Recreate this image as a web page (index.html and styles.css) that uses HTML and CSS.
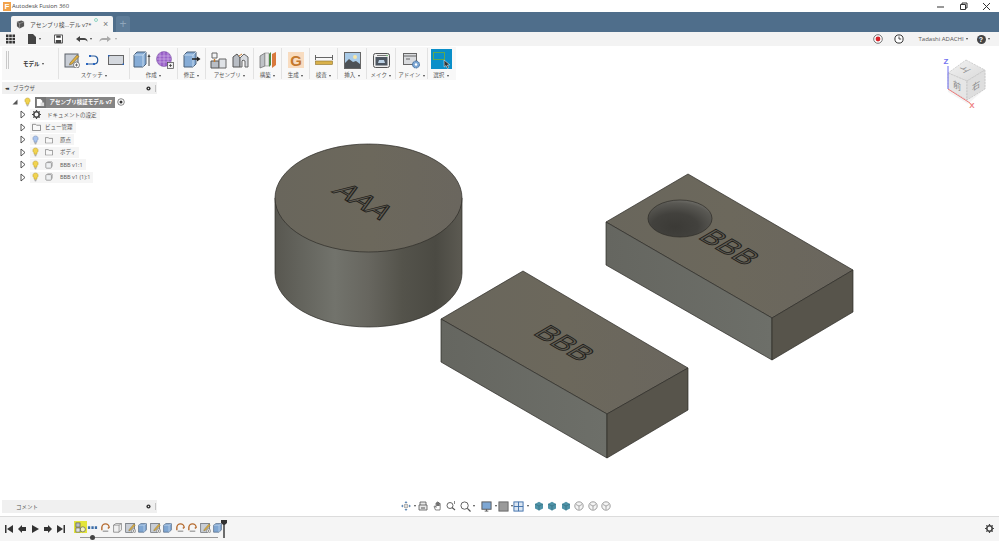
FILE: index.html
```html
<!DOCTYPE html>
<html lang="ja">
<head>
<meta charset="utf-8">
<title>Autodesk Fusion 360</title>
<link rel="stylesheet" href="styles.css">
</head>
<body>
<svg class="defs" width="0" height="0">
  <defs>
    <symbol id="i-sketch" viewBox="0 0 16 16"><rect x="1" y="2" width="13" height="13" fill="#c9ced6" stroke="#5b6068"/><path d="M6 11 13 3l2 1.500L8 12l-2.500 1z" fill="#e0b040" stroke="#77663a" stroke-width=".6"/><circle cx="12.500" cy="13" r="3" fill="#fff" stroke="#555" stroke-width=".7"/><path d="M11 13h3M12.500 11.500v3" stroke="#444" stroke-width=".7"/></symbol>
    <symbol id="i-box" viewBox="0 0 14 14"><path d="M2 4 5 2h7v8l-3 3H2z" fill="#7fa6d2" stroke="#4a5f78" stroke-width=".8"/><path d="M2 4h7v9M9 4l3-2" fill="none" stroke="#dbe8f5" stroke-width=".7"/></symbol>
    <symbol id="i-revolve" viewBox="0 0 12 12"><path d="M2 9V6a4 4 0 1 1 8 0l-1.500 1" fill="none" stroke="#b56a2e" stroke-width="1.500"/><path d="M3 10h6" stroke="#777"/></symbol>
    <symbol id="i-light" viewBox="0 0 8 11"><path d="M4 .8a3 3 0 0 1 1.800 5.400L5.500 8h-3l-.3-1.800A3 3 0 0 1 4 .8z" fill="#f1d34f" stroke="#b89b2a" stroke-width=".6"/><path d="M2.800 9h2.400M3.200 10h1.600" stroke="#777" stroke-width=".7"/></symbol>
    <symbol id="i-light-blue" viewBox="0 0 8 11"><path d="M4 .8a3 3 0 0 1 1.800 5.400L5.500 8h-3l-.3-1.800A3 3 0 0 1 4 .8z" fill="#a9c4ee" stroke="#7187ad" stroke-width=".6"/><path d="M2.800 9h2.400M3.200 10h1.600" stroke="#777" stroke-width=".7"/></symbol>
    <symbol id="i-folder" viewBox="0 0 10 9"><path d="M.5 1.500h3.500l1 1h4.500v6H.5z" fill="#f8f8f8" stroke="#6a6a6a" stroke-width=".8"/></symbol>
    <symbol id="i-comp" viewBox="0 0 10 10"><rect x="1" y="2" width="7" height="7" rx="1" fill="#eef0f2" stroke="#777" stroke-width=".8"/><path d="M3 1h5.500l.5.500V7" fill="none" stroke="#888" stroke-width=".8"/></symbol>
    <symbol id="i-gear" viewBox="0 0 10 10"><circle cx="5" cy="5" r="3" fill="none" stroke="#444" stroke-width="1.800"/><path d="M5 0v2M5 8v2M0 5h2M8 5h2M1.500 1.500l1.400 1.400M7.100 7.100l1.400 1.400M1.500 8.500l1.400-1.400M7.100 2.900l1.400-1.400" stroke="#444" stroke-width="1.300"/></symbol>
    <symbol id="i-twist" viewBox="0 0 6 9"><path d="M1 1l4 3.500L1 8z" fill="#fff" stroke="#444" stroke-width=".9"/></symbol>
    <symbol id="i-cube" viewBox="0 0 10 10"><path d="M5 .8 9 3v4.500L5 9.500 1 7.500V3z" fill="#4f93a8"/><path d="M1 3l4 2 4-2M5 5v4.500" fill="none" stroke="#2e6273" stroke-width=".5"/></symbol>
    <symbol id="i-cube-o" viewBox="0 0 10 10"><circle cx="5" cy="5" r="4.200" fill="#f4f4f4" stroke="#777" stroke-width=".7"/><path d="M2 3.500 5 5l3-1.500M5 5v3.500" fill="none" stroke="#777" stroke-width=".6"/></symbol>
  </defs>
</svg>

<div class="app">
  <header class="titlebar">
    <div class="title-left">
      <span class="fusion-logo">F</span>
      <span class="title-text">Autodesk Fusion 360</span>
    </div>
    <div class="window-controls">
      <svg class="win-icon" viewBox="0 0 9 9"><path d="M1 5h7" stroke="#333"/></svg>
      <svg class="win-icon" viewBox="0 0 9 9"><path d="M1.500 2.500h5v5h-5zM3 2.500V1h5v5H6.500" fill="none" stroke="#333"/></svg>
      <svg class="win-icon" viewBox="0 0 9 9"><path d="M1 1l7 7M8 1 1 8" stroke="#333"/></svg>
    </div>
  </header>

  <nav class="tabbar">
    <div class="tab">
      <svg class="tab-cube" viewBox="0 0 10 10"><path d="M1 2 6 .5 9 2v5L4 9.500 1 7z" fill="#555"/><path d="M1 2l3 2 5-2M4 4v5.500" stroke="#ccc" stroke-width=".5" fill="none"/></svg>
      <span class="tab-text">アセンブリ検…デル v7*</span>
      <span class="tab-status"></span>
      <span class="tab-close">×</span>
    </div>
    <div class="tab-new">+</div>
  </nav>

  <div class="quickbar">
    <div class="quick-left">
      <svg class="q-grid" viewBox="0 0 9 9"><path d="M0 0h2.500v2.500H0zM3.200 0h2.600v2.500H3.200zM6.500 0H9v2.500H6.500zM0 3.200h2.500v2.600H0zM3.200 3.200h2.600v2.600H3.200zM6.500 3.200H9v2.600H6.500zM0 6.500h2.500V9H0zM3.200 6.500h2.600V9H3.200zM6.500 6.500H9V9H6.500z" fill="#333"/></svg>
      <span class="q-item q-file"><svg class="q-ic" viewBox="0 0 8 10"><path d="M0 0h5l3 3v7H0z" fill="#444"/></svg><i class="caret"></i></span>
      <svg class="q-ic q-save" viewBox="0 0 10 10"><path d="M.5.500h9v9h-9z" fill="#fff" stroke="#444"/><path d="M2.500 1h5v2.500h-5zM2 6h6v3.500H2z" fill="#444"/></svg>
      <span class="q-item q-undo"><svg class="q-arrow" viewBox="0 0 13 8"><path d="M5 1 1 4l4 3V5h4c1.500 0 3 .5 3.500 2C12.500 4 11 3 9 3H5z" fill="#444"/></svg><i class="caret"></i></span>
      <span class="q-item q-redo"><svg class="q-arrow" viewBox="0 0 13 8"><path d="M8 1l4 3-4 3V5H4C2.500 5 1 5.500.5 7 .500 4 2 3 4 3h4z" fill="#aaa"/></svg><i class="caret light"></i></span>
    </div>
    <div class="quick-right">
      <svg class="q-round" viewBox="0 0 10 10"><circle cx="5" cy="5" r="4.300" fill="#fff" stroke="#555" stroke-width=".8"/><circle cx="5" cy="5" r="2.400" fill="#d7242a"/></svg>
      <svg class="q-round q-clock" viewBox="0 0 10 10"><circle cx="5" cy="5" r="4.100" fill="#fff" stroke="#333" stroke-width="1"/><path d="M5 2.500V5h2.200" fill="none" stroke="#333" stroke-width=".9"/></svg>
      <span class="user">Tadashi ADACHI<i class="caret"></i></span>
      <span class="help"><span class="help-mark">?</span><i class="caret"></i></span>
    </div>
  </div>

  <main class="viewport">
    <svg class="scene" viewBox="0 46 999 470" width="999" height="470">
      <defs>
        <linearGradient id="cyl" x1="0" x2="1" y1="0" y2="0">
          <stop offset="0" stop-color="#585750"/>
          <stop offset=".12" stop-color="#62625b"/>
          <stop offset=".32" stop-color="#72736c"/>
          <stop offset=".5" stop-color="#67665f"/>
          <stop offset=".68" stop-color="#54534b"/>
          <stop offset=".86" stop-color="#4b4a43"/>
          <stop offset="1" stop-color="#5c5a52"/>
        </linearGradient>
        <linearGradient id="topface" x1="0" x2="1" y1="0" y2="0">
          <stop offset="0" stop-color="#69665c"/>
          <stop offset=".5" stop-color="#6c685c"/>
          <stop offset="1" stop-color="#6a665e"/>
        </linearGradient>
        <linearGradient id="sideface" x1="0" x2="1" y1="0" y2="0">
          <stop offset="0" stop-color="#656660"/>
          <stop offset="1" stop-color="#6d6f69"/>
        </linearGradient>
        <radialGradient id="hole" cx=".42" cy=".72" r=".8">
          <stop offset="0" stop-color="#3b3a36"/>
          <stop offset=".45" stop-color="#42413d"/>
          <stop offset=".8" stop-color="#5a5954"/>
          <stop offset="1" stop-color="#7c7b75"/>
        </radialGradient>
        <linearGradient id="cubeface" x1="0" x2="1" y1="0" y2="1">
          <stop offset="0" stop-color="#f2f2f2"/>
          <stop offset="1" stop-color="#d9d9d9"/>
        </linearGradient>
      </defs>

      <g class="edge">
        <path d="M275 198v75a93.500 54 0 0 0 187 0v-75z" fill="url(#cyl)"/>
        <ellipse cx="368.500" cy="198" rx="93.500" ry="54" fill="url(#topface)"/>
      </g>
      <text class="emboss" transform="matrix(.862 .507 -.862 .507 364 201)" y="10" text-anchor="middle">AAA</text>

      <g class="edge">
        <path d="M606 222 772 318 853 270 688 174z" fill="url(#topface)"/>
        <path d="M606 222 772 318V360L606 265z" fill="url(#sideface)"/>
        <path d="M772 318 853 270V312L772 360z" fill="#57544b"/>
        <ellipse cx="680" cy="218.500" rx="32" ry="18.500" fill="url(#hole)"/>
      </g>
      <text class="emboss" transform="matrix(.862 .507 -.862 .507 730 247)" y="10" text-anchor="middle">BBB</text>

      <g class="edge">
        <path d="M441 319 607 414 688 368 523 271z" fill="url(#topface)"/>
        <path d="M441 319 607 414V458L441 362z" fill="url(#sideface)"/>
        <path d="M607 414 688 368V410L607 458z" fill="#57544b"/>
      </g>
      <text class="emboss" transform="matrix(.862 .507 -.862 .507 565 343)" y="10" text-anchor="middle">BBB</text>

      <g class="viewcube">
        <path d="M948 92 968 104 986 88 986 72 966 60 948 73z" fill="#e8e8e8" opacity=".5"/>
        <path d="M966 60 985 70 967 81 948 73z" fill="url(#cubeface)" stroke="#bbb" stroke-width=".6" stroke-dasharray="2 1"/>
        <path d="M948 73 967 81V100L948 89z" fill="#e6e6e6" stroke="#bbb" stroke-width=".6" stroke-dasharray="2 1"/>
        <path d="M967 81 985 70V89L967 100z" fill="#dedede" stroke="#bbb" stroke-width=".6" stroke-dasharray="2 1"/>
        <path d="M948 89V66" stroke="#6c6cf0" stroke-width="1"/>
        <path d="M948 89 970 103" stroke="#ee7b7b" stroke-width="1"/>
        <text class="axis axis-z" x="946" y="64" text-anchor="middle">Z</text>
        <text class="axis axis-x" x="972" y="108" text-anchor="middle">X</text>
        <text class="cube-label" transform="matrix(.9 -.45 .9 .45 967 71)" text-anchor="middle">上</text>
        <text class="cube-label" transform="matrix(.9 .5 0 1 957 89)" text-anchor="middle">前</text>
        <text class="cube-label" transform="matrix(.9 -.55 0 1 976 89)" text-anchor="middle">右</text>
      </g>
    </svg>

    <section class="ribbon">
      <div class="grip"></div>
      <div class="group group-mode"><span class="mode-label">モデル<i class="caret"></i></span></div>
      <div class="group group-sketch">
        <div class="icons">
          <svg class="ic16" viewBox="0 0 16 16"><use href="#i-sketch"/></svg>
          <svg class="ic16" viewBox="0 0 16 16"><path d="M1 12h7c5 0 5-8 0-8H4" fill="none" stroke="#2a5d9e" stroke-width="1.200"/><path d="M0 11h2v2H0zM3 3h2v2H3zM7 11h2v2H7z" fill="#2a66c0"/></svg>
          <svg class="ic16" viewBox="0 0 16 16"><rect x=".5" y="3.500" width="15" height="9" fill="#d4d8de" stroke="#666"/><path d="M0 3h1.500v1.500H0zM14.500 11.500H16V13h-1.500z" fill="#2a66c0"/></svg>
        </div>
        <span class="label">スケッチ<i class="caret"></i></span>
      </div>
      <div class="group group-create">
        <div class="icons">
          <svg class="ic18" viewBox="0 0 18 18"><path d="M1 4 4 1h9v12l-3 3H1z" fill="#86acd6" stroke="#4b6079"/><path d="M1 4h9v12M10 4l3-3" fill="none" stroke="#d6e6f5" stroke-width=".8"/><path d="M16 15V5" stroke="#444"/><path d="M14.500 6 16 3l1.500 3z" fill="#444"/></svg>
          <svg class="ic18" viewBox="0 0 18 18"><circle cx="8" cy="8" r="7.500" fill="#9a62c9" stroke="#6a3e94" stroke-width=".5"/><path d="M1 5h14M.5 8h15M1 11h14M4 1v14M8 .5v15M12 1v14" stroke="#d6bfea" stroke-width=".6"/><rect x="11.500" y="11.500" width="6" height="6" fill="#eee" stroke="#444" stroke-width=".7"/><path d="M13 14.500h3M14.500 13v3" stroke="#333" stroke-width=".7"/></svg>
        </div>
        <span class="label">作成<i class="caret"></i></span>
      </div>
      <div class="group group-narrow">
        <div class="icons">
          <svg class="ic18" viewBox="0 0 18 18"><path d="M1 4 4 1h9v12l-3 3H1z" fill="#86acd6" stroke="#4b6079"/><path d="M1 4h9v12M10 4l3-3" fill="none" stroke="#d6e6f5" stroke-width=".8"/><path d="M9 8h7" stroke="#222" stroke-width="1.500"/><path d="M14 5.500 17.500 8 14 10.500z" fill="#222"/></svg>
        </div>
        <span class="label">修正<i class="caret"></i></span>
      </div>
      <div class="group group-assembly">
        <div class="icons">
          <svg class="ic17" viewBox="0 0 17 17"><path d="M1 9h8v7H1z" fill="#b9bec5" stroke="#555"/><path d="M9 7h7v9H9z" fill="#dfe2e6" stroke="#666"/><path d="M2 1h5v5H2z" fill="#f2f3f4" stroke="#666"/><path d="M4.500 7v3" stroke="#c77a2d" stroke-width="1.400"/></svg>
          <svg class="ic17" viewBox="0 0 17 17"><path d="M1 15V5l4-3 3 4v9z" fill="#b8bdc4" stroke="#555"/><path d="M8 15V6l4-4 4 3v10h-3V9l-2-1-1 1v6z" fill="#d8dbe0" stroke="#666"/><path d="M7 4l3-2" stroke="#c77a2d"/></svg>
        </div>
        <span class="label">アセンブリ<i class="caret"></i></span>
      </div>
      <div class="group group-narrow">
        <div class="icons">
          <svg class="ic18" viewBox="0 0 18 18"><path d="M1 5 6 2v13l-5 2z" fill="#bfc2c6" stroke="#666" stroke-width=".7"/><path d="M6 2h4v13H6z" fill="#e8e8e8" stroke="#888" stroke-width=".6"/><path d="M10 3l2-2v13l-2 2z" fill="#4e8a45"/><path d="M13 3l4-2v13l-4 3z" fill="#d9793d"/></svg>
        </div>
        <span class="label">構築<i class="caret"></i></span>
      </div>
      <div class="group group-narrow">
        <div class="icons">
          <svg class="ic16" viewBox="0 0 16 16"><rect width="16" height="16" fill="#f8dcc0"/><text class="g-letter" x="8" y="13.500" text-anchor="middle">G</text></svg>
        </div>
        <span class="label">生成<i class="caret"></i></span>
      </div>
      <div class="group group-narrow">
        <div class="icons">
          <svg class="ic18" viewBox="0 0 18 18"><path d="M.5 4v5M17.500 4v5M.5 6.500h17" stroke="#555" stroke-width=".9"/><rect x=".5" y="10" width="17" height="3.500" fill="#d9b14a" stroke="#8a6f28" stroke-width=".6"/></svg>
        </div>
        <span class="label">検査<i class="caret"></i></span>
      </div>
      <div class="group group-wide">
        <div class="icons">
          <svg class="ic17" viewBox="0 0 17 17"><rect x=".5" y=".5" width="16" height="16" fill="#a9cbe8" stroke="#666"/><circle cx="11" cy="5" r="2" fill="#f5e6a8"/><path d="M1 16V11l4-4 4 3 3-1 4 3v4z" fill="#4d5257"/></svg>
        </div>
        <span class="label">挿入<i class="caret"></i></span>
      </div>
      <div class="group group-wide">
        <div class="icons">
          <svg class="ic17" viewBox="0 0 17 17"><rect x=".5" y="1.500" width="16" height="14" rx="2" fill="#eee" stroke="#555"/><rect x="2.500" y="5" width="12" height="8.500" fill="#4d5660"/><path d="M5 11h7L11 8H6z" fill="#bcd2e6"/><path d="M4 3.500h9" stroke="#777"/><circle cx="14" cy="3.500" r=".8" fill="#4ca24c"/></svg>
        </div>
        <span class="label">メイク<i class="caret"></i></span>
      </div>
      <div class="group group-addin">
        <div class="icons">
          <svg class="ic17" viewBox="0 0 17 17"><rect x=".5" y="1.500" width="13" height="11" fill="#d9dbde" stroke="#666"/><path d="M.5 4h13M3 7h4" stroke="#666"/><circle cx="13" cy="12.500" r="3.500" fill="#7da7d4" stroke="#3f6a99" stroke-dasharray="1.500 .6"/><circle cx="13" cy="12.500" r="1.200" fill="#fff"/></svg>
        </div>
        <span class="label">アドイン<i class="caret"></i></span>
      </div>
      <div class="group group-select">
        <div class="select-box">
          <svg class="select-ic" viewBox="0 0 21 20"><rect x="2.500" y="3.500" width="11" height="7" fill="none" stroke="#5ca854"/><path d="M13 11l.2 7 1.800-1.500L16.500 19.500l1.200-.7-1.300-2.700 2.400-.3z" fill="#333" stroke="#fff" stroke-width=".5"/></svg>
        </div>
        <span class="label">選択<i class="caret"></i></span>
      </div>
    </section>

    <aside class="browser">
      <div class="panel-head">
        <span class="collapse">◂◂</span>
        <span class="panel-title">ブラウザ</span>
        <svg class="panel-dot" viewBox="0 0 6 6"><circle cx="3" cy="3" r="2.500" fill="#333"/><circle cx="3" cy="3" r=".8" fill="#eee"/></svg>
        <span class="panel-bar"></span>
      </div>
      <ul class="tree">
        <li class="row root">
          <svg class="twist-open" viewBox="0 0 6 6"><path d="M.5 5.500 5.500.5v5z" fill="#555"/></svg>
          <svg class="bulb" viewBox="0 0 8 11"><use href="#i-light"/></svg>
          <span class="root-icon"><svg class="root-doc" viewBox="0 0 10 10"><path d="M1 1h4l2 2v6H1z" fill="#fff"/><path d="M5 5h4v4H5z" fill="#ddd"/></svg></span>
          <span class="root-label">アセンブリ検証モデル v7</span>
          <svg class="root-radio" viewBox="0 0 8 8"><circle cx="4" cy="4" r="3.300" fill="#fff" stroke="#555" stroke-width=".7"/><circle cx="4" cy="4" r="1.500" fill="#333"/></svg>
        </li>
        <li class="row">
          <svg class="twist" viewBox="0 0 6 9"><use href="#i-twist"/></svg>
          <span class="pill"><svg class="gear" viewBox="0 0 10 10"><use href="#i-gear"/></svg><span class="pill-text doc">ドキュメントの設定</span></span>
        </li>
        <li class="row">
          <svg class="twist" viewBox="0 0 6 9"><use href="#i-twist"/></svg>
          <span class="pill"><svg class="folder lead" viewBox="0 0 10 9"><use href="#i-folder"/></svg><span class="pill-text view">ビュー管理</span></span>
        </li>
        <li class="row">
          <svg class="twist" viewBox="0 0 6 9"><use href="#i-twist"/></svg>
          <span class="pill"><svg class="bulb" viewBox="0 0 8 11"><use href="#i-light-blue"/></svg><svg class="folder" viewBox="0 0 10 9"><use href="#i-folder"/></svg><span class="pill-text">原点</span></span>
        </li>
        <li class="row">
          <svg class="twist" viewBox="0 0 6 9"><use href="#i-twist"/></svg>
          <span class="pill"><svg class="bulb" viewBox="0 0 8 11"><use href="#i-light"/></svg><svg class="folder" viewBox="0 0 10 9"><use href="#i-folder"/></svg><span class="pill-text">ボディ</span></span>
        </li>
        <li class="row">
          <svg class="twist" viewBox="0 0 6 9"><use href="#i-twist"/></svg>
          <span class="pill"><svg class="bulb" viewBox="0 0 8 11"><use href="#i-light"/></svg><svg class="folder" viewBox="0 0 10 10"><use href="#i-comp"/></svg><span class="pill-text">BBB v1:1</span></span>
        </li>
        <li class="row">
          <svg class="twist" viewBox="0 0 6 9"><use href="#i-twist"/></svg>
          <span class="pill"><svg class="bulb" viewBox="0 0 8 11"><use href="#i-light"/></svg><svg class="folder" viewBox="0 0 10 10"><use href="#i-comp"/></svg><span class="pill-text">BBB v1 (1):1</span></span>
        </li>
      </ul>
    </aside>

    <div class="bottom-row">
      <div class="comment-panel">
        <span class="panel-title comment-title">コメント</span>
        <svg class="panel-dot" viewBox="0 0 6 6"><circle cx="3" cy="3" r="2.500" fill="#333"/><circle cx="3" cy="3" r=".8" fill="#eee"/></svg>
        <span class="panel-bar"></span>
      </div>
      <div class="navbar">
        <span class="nav-item nav-orbit"><svg class="nav-ic" viewBox="0 0 10 10"><path d="M5 0l1.500 2h-3zM5 10 3.500 8h3zM0 5l2-1.500v3zM10 5 8 3.500v3z" fill="#5f88b5"/><circle cx="5" cy="5" r="2" fill="#ddd" stroke="#777" stroke-width=".6"/></svg><i class="caret"></i></span>
        <svg class="nav-ic nav-print" viewBox="0 0 10 10"><path d="M2 4V1h6v3M1 4h8v5H1z" fill="#e8e8e8" stroke="#555" stroke-width=".8"/><path d="M3 7h4" stroke="#555"/></svg>
        <svg class="nav-ic nav-hand" viewBox="0 0 10 10"><path d="M2.500 9 1 5.500l1-.5 1 1.500V2l1 0v3-4h1v4-3.500h1V5 2.500h1.200V7L7 9z" fill="#fff" stroke="#555" stroke-width=".7"/></svg>
        <svg class="nav-ic nav-zoom" viewBox="0 0 10 10"><circle cx="4" cy="4.500" r="3" fill="#fff" stroke="#555" stroke-width=".9"/><path d="M6 6.500 9 9" stroke="#555" stroke-width="1.100"/><path d="M8.500 0v3" stroke="#555" stroke-width=".7"/></svg>
        <span class="nav-item nav-fit"><svg class="nav-ic big" viewBox="0 0 12 12"><circle cx="5" cy="5" r="4" fill="#fff" stroke="#555"/><path d="M8 8l3.500 3.500" stroke="#555" stroke-width="1.300"/></svg><i class="caret"></i></span>
        <span class="nav-item nav-disp"><svg class="nav-ic big" viewBox="0 0 12 12"><rect x="1" y="1" width="10" height="8" fill="#7da7d4" stroke="#555"/><path d="M4 11h4M6 9v2" stroke="#555"/></svg><i class="caret"></i></span>
        <span class="nav-item nav-grid"><svg class="nav-ic big" viewBox="0 0 12 12"><rect x="1" y="1" width="10" height="10" fill="#9a9a9a" stroke="#666"/></svg><i class="caret"></i></span>
        <span class="nav-item nav-view"><svg class="nav-ic big" viewBox="0 0 12 12"><rect x="1" y="1" width="10" height="10" fill="#dbe6f2" stroke="#3d6ea8"/><path d="M1 6h10M6 1v10" stroke="#3d6ea8"/></svg><i class="caret"></i></span>
        <div class="cube-set">
          <svg class="nav-ic" viewBox="0 0 10 10"><use href="#i-cube"/></svg>
          <svg class="nav-ic" viewBox="0 0 10 10"><use href="#i-cube"/></svg>
          <svg class="nav-ic" viewBox="0 0 10 10"><use href="#i-cube"/></svg>
          <svg class="nav-ic" viewBox="0 0 10 10"><use href="#i-cube-o"/></svg>
          <svg class="nav-ic" viewBox="0 0 10 10"><use href="#i-cube-o"/></svg>
          <svg class="nav-ic" viewBox="0 0 10 10"><use href="#i-cube-o"/></svg>
        </div>
      </div>
    </div>
  </main>

  <footer class="timeline">
    <div class="transport">
      <svg class="tr" viewBox="0 0 8 8"><path d="M0 0h1.500v8H0zM8 0v8L2 4z" fill="#333"/></svg>
      <svg class="tr" viewBox="0 0 8 8"><path d="M0 4 4 0v8zM4 2h4v4H4z" fill="#333"/></svg>
      <svg class="tr" viewBox="0 0 8 8"><path d="M1 0l7 4-7 4z" fill="#333"/></svg>
      <svg class="tr" viewBox="0 0 8 8"><path d="M8 4 4 0v8zM0 2h4v4H0z" fill="#333"/></svg>
      <svg class="tr" viewBox="0 0 8 8"><path d="M8 0H6.500v8H8zM0 0v8l6-4z" fill="#333"/></svg>
    </div>
    <div class="track">
      <span class="step active"><svg class="step-ic" viewBox="0 0 12 12"><rect x="1" y="1" width="4.500" height="4.500" fill="#b9bec5" stroke="#555" stroke-width=".7"/><circle cx="8.500" cy="8" r="2.800" fill="#f2f2c8" stroke="#555" stroke-width=".7"/><rect x="1" y="6.500" width="4.500" height="4.500" fill="#dfe2e6" stroke="#555" stroke-width=".7"/></svg></span>
      <span class="step"><svg class="step-ic" viewBox="0 0 12 12"><path d="M1 4.500h2.500v3H1zM4.800 4.500h2.500v3H4.800zM8.500 4.500H11v3H8.500z" fill="#3d6ea8"/></svg></span>
      <span class="step"><svg class="step-ic" viewBox="0 0 12 12"><use href="#i-revolve"/></svg></span>
      <span class="step"><svg class="step-ic" viewBox="0 0 14 14"><path d="M2 4 5 2h7v8l-3 3H2z" fill="#f0f0f0" stroke="#666" stroke-width=".8"/><path d="M2 4h7v9M9 4l3-2" fill="none" stroke="#666" stroke-width=".7"/></svg></span>
      <span class="step"><svg class="step-ic" viewBox="0 0 16 16"><use href="#i-sketch"/></svg></span>
      <span class="step"><svg class="step-ic" viewBox="0 0 14 14"><use href="#i-box"/></svg></span>
      <span class="step"><svg class="step-ic" viewBox="0 0 16 16"><use href="#i-sketch"/></svg></span>
      <span class="step"><svg class="step-ic" viewBox="0 0 14 14"><use href="#i-box"/></svg></span>
      <span class="step"><svg class="step-ic" viewBox="0 0 12 12"><use href="#i-revolve"/></svg></span>
      <span class="step"><svg class="step-ic" viewBox="0 0 12 12"><use href="#i-revolve"/></svg></span>
      <span class="step"><svg class="step-ic" viewBox="0 0 16 16"><use href="#i-sketch"/></svg></span>
      <span class="step"><svg class="step-ic" viewBox="0 0 14 14"><use href="#i-box"/></svg></span>
      <span class="scrub"><span class="knob"></span></span>
      <svg class="marker" viewBox="0 0 6 18"><path d="M0 0h6v3L3.700 5v13H2.300V5L0 3z" fill="#333"/></svg>
    </div>
    <svg class="tl-gear" viewBox="0 0 10 10"><use href="#i-gear"/></svg>
  </footer>
</div>
</body>
</html>
```

FILE: styles.css
```css
* { box-sizing: border-box; }
html, body { margin: 0; height: 100%; overflow: hidden; background: #fff; }
body { font-family: "Open Sans", "Noto Sans CJK JP", sans-serif; color: #444; }
.defs { position: absolute; }
svg { display: block; flex: none; }
i { font-style: normal; }

.app { width: 999px; height: 541px; display: flex; flex-direction: column; }

.caret { display: inline-block; width: 0; height: 0; margin-left: 2.500px; vertical-align: middle; border-left: 1.500px solid transparent; border-right: 1.500px solid transparent; border-top: 2px solid #444; }
.caret.light { border-top-color: #aaa; }

/* title bar */
.titlebar { height: 12px; display: flex; align-items: center; justify-content: space-between; background: #fff; }
.title-left { display: flex; align-items: center; padding-left: 3px; }
.fusion-logo { width: 8px; height: 9px; background: #f2a24a; color: #fff; font: 700 8px/9px "Liberation Sans", sans-serif; text-align: center; }
.title-text { margin-left: 1px; font-size: 5.900px; line-height: 12px; color: #444; white-space: nowrap; }
.window-controls { display: flex; gap: 14px; padding-right: 8px; }
.win-icon { width: 9px; height: 9px; }

/* tabs */
.tabbar { height: 20px; background: #4f6e8b; display: flex; align-items: flex-end; padding-left: 11px; gap: 3px; }
.tab { width: 102px; height: 16px; background: #f5f5f5; border-radius: 2px 2px 0 0; display: flex; align-items: center; padding-left: 5px; }
.tab-cube { width: 9px; height: 9px; }
.tab-text { margin-left: 5px; width: 61px; font-size: 5.800px; color: #444; white-space: nowrap; }
.tab-status { width: 4px; height: 4px; border: 1px solid #8fd6c4; border-radius: 50%; margin: -8px 0 0 3px; }
.tab-close { margin-left: 5px; font: 9px/9px "Liberation Sans", sans-serif; color: #777; }
.tab-new { width: 14px; height: 16px; background: #5e7c98; color: #8fa6bb; border-radius: 2px 2px 0 0; font: 12px/16px "Liberation Sans", sans-serif; text-align: center; }

/* quick access */
.quickbar { height: 14px; background: #f3f3f3; display: flex; align-items: center; justify-content: space-between; }
.quick-left { display: flex; align-items: center; padding-left: 6px; }
.q-grid { width: 9px; height: 10px; }
.q-item { display: flex; align-items: center; }
.q-ic { width: 8px; height: 10px; }
.q-file { margin-left: 13px; }
.q-save { width: 9px; margin-left: 13px; }
.q-arrow { width: 13px; height: 8px; }
.q-undo { margin-left: 12px; }
.q-redo { margin-left: 7px; }
.quick-right { display: flex; align-items: center; padding-right: 9px; }
.q-round { width: 10px; height: 10px; }
.q-clock { margin-left: 11px; }
.user { margin-left: 15px; width: 53px; font-size: 6px; color: #555; white-space: nowrap; }
.help { margin-left: 5px; display: flex; align-items: center; }
.help-mark { width: 9px; height: 9px; border-radius: 50%; background: #444; color: #fff; font: 700 7px/9px "Liberation Sans", sans-serif; text-align: center; }

/* viewport */
.viewport { position: relative; flex: 1; display: flex; flex-direction: column; min-height: 0; }
.scene { position: absolute; left: 0; top: 0; }
.edge path, .edge ellipse { stroke: #2c2b27; stroke-width: .7; stroke-linejoin: round; }
.emboss { font: 400 28px "Liberation Sans", sans-serif; fill: #5f5c53; stroke: #1f1e1b; stroke-width: 1; }
.axis { font: 700 8px "Liberation Sans", sans-serif; }
.axis-z { fill: #7272f0; }
.axis-x { fill: #ee8080; }
.cube-label { font: 9px "Noto Sans CJK JP", sans-serif; fill: #8a8a8a; }

/* ribbon */
.ribbon { position: relative; width: 454px; height: 33px; margin: 1px 0 0 2px; background: #f8f8f8; display: flex; }
.grip { position: absolute; left: 4px; top: 4px; width: 3px; height: 18px; border-left: 1px solid #c9c9c9; border-right: 1px solid #c9c9c9; }
.group { display: flex; flex-direction: column; align-items: center; justify-content: space-between; padding: 3px 0 0; border-right: 1px solid #e2e2e2; margin: 1px 0 1px; }
.group-mode { width: 57px; justify-content: center; padding: 0 0 0 7px; }
.group-sketch { width: 71px; }
.group-create { width: 48px; }
.group-assembly { width: 48px; }
.group-narrow { width: 28px; }
.group-wide { width: 29px; }
.group-addin { width: 32px; }
.group-select { width: 26px; border-right: 0; padding-top: 1px; }
.icons { display: flex; align-items: center; gap: 5px; height: 18px; }
.group-sketch .icons { gap: 6px; }
.ic16 { width: 16px; height: 16px; }
.ic17 { width: 17px; height: 17px; }
.ic18 { width: 18px; height: 18px; }
.label { font-size: 5.500px; line-height: 7px; color: #555; white-space: nowrap; }
.mode-label { font-size: 5.500px; font-weight: 700; color: #333; }
.g-letter { font: 700 15px "Liberation Sans", sans-serif; fill: #c4782c; }
.select-box { width: 21px; height: 20px; background: #0a8fc9; }
.select-ic { width: 21px; height: 20px; }

/* browser */
.browser { width: 155px; margin: 2px 0 0 2px; position: relative; }
.panel-head, .comment-panel { height: 12px; background: #f0f0f0; display: flex; align-items: center; padding: 0 1px 0 3px; }
.collapse { font: 5px/12px "DejaVu Sans", sans-serif; color: #333; letter-spacing: -1px; }
.panel-title { margin-left: 5px; font-size: 5.500px; color: #555; flex: 1; white-space: nowrap; }
.comment-title { margin-left: 11px; }
.panel-dot { width: 5px; height: 5px; }
.panel-bar { width: 1px; height: 7px; background: #c4c4c4; margin-left: 4px; }
.tree { list-style: none; margin: 2px 0 0; padding: 0; }
.row { height: 12.500px; display: flex; align-items: center; padding-left: 18px; }
.twist { width: 6px; height: 9px; }
.pill { display: flex; align-items: center; height: 11px; margin-left: 4px; padding: 0 3px 0 2px; background: #f5f5f5; }
.pill-text { margin-left: 7px; font-size: 5.500px; color: #555; white-space: nowrap; }
.pill-text.doc { margin-left: 6px; }
.pill-text.view { margin-left: 4px; }
.bulb { width: 7px; height: 10px; }
.folder { width: 8px; height: 8px; margin-left: 6px; }
.folder.lead { margin-left: 0; width: 9px; }
.gear { width: 9px; height: 9px; }
.root { padding-left: 10px; }
.root .bulb { margin-left: 6px; }
.twist-open { width: 6px; height: 6px; }
.root-icon { margin-left: 4px; width: 11px; height: 11px; background: #767676; display: flex; align-items: center; justify-content: center; }
.root-doc { width: 9px; height: 9px; }
.root-label { height: 11px; width: 69px; background: #858585; color: #fff; font-size: 5.500px; font-weight: 700; line-height: 11px; text-align: right; padding-right: 3px; white-space: nowrap; }
.root-radio { width: 8px; height: 8px; margin-left: 2px; }

/* bottom */
.bottom-row { margin-top: auto; height: 16px; position: relative; display: flex; align-items: flex-start; }
.comment-panel { width: 155px; height: 13px; margin-left: 2px; flex: none; }
.navbar { margin-left: 244px; height: 12px; display: flex; align-items: center; }
.nav-item { display: flex; align-items: center; }
.nav-ic { width: 10px; height: 10px; }
.nav-ic.big { width: 11px; height: 11px; }
.nav-print { margin-left: 2px; }
.nav-hand { margin-left: 5px; }
.nav-zoom { margin-left: 3px; }
.nav-fit { margin-left: 4px; }
.nav-disp { margin-left: 6px; }
.nav-grid { margin-left: 1px; }
.nav-view { margin-left: 0; }
.cube-set { display: flex; gap: 3.500px; margin-left: 5px; }

/* timeline */
.timeline { height: 25px; background: #f5f5f5; border-top: 1px solid #dcdcdc; display: flex; align-items: center; padding-right: 5px; position: relative; }
.transport { display: flex; gap: 5px; padding-left: 5px; width: 74px; }
.tr { width: 8px; height: 8px; }
.track { position: relative; display: flex; align-items: center; height: 24px; flex: 1; }
.step { width: 12.500px; height: 12px; display: flex; align-items: center; justify-content: center; margin-top: -4px; }
.step.active { background: #e3e53a; }
.step-ic { width: 11px; height: 11px; }
.scrub { position: absolute; left: 6px; top: 20px; width: 138px; height: 1px; background: #999; }
.knob { position: absolute; left: 10px; top: -2px; width: 5px; height: 5px; border-radius: 50%; background: #444; }
.marker { position: absolute; left: 147px; top: 3px; width: 6px; height: 18px; }
.tl-gear { width: 9px; height: 9px; position: absolute; right: 5px; top: 7px; }
```
